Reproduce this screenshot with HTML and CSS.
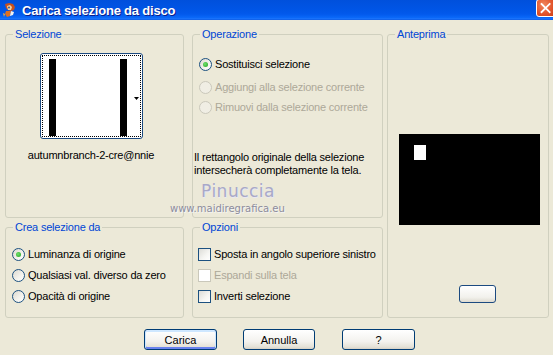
FILE: index.html
```html
<!DOCTYPE html>
<html>
<head>
<meta charset="utf-8">
<title>Carica selezione da disco</title>
<link rel="stylesheet" href="styles.css">
</head>
<body>
<div class="win">
  <div class="titlebar">
    <svg class="appicon" width="16" height="16" viewBox="0 0 16 16">
      <path d="M3 2 L7 1 L11 2 L13 5 L12 8 L9 9 L6 8 L4 6 Z" fill="#c8501e"/>
      <path d="M5 4 L8 3 L10 5 L9 8 L6 8 Z" fill="#f4d2a0"/>
      <circle cx="7" cy="5.5" r="0.9" fill="#2050a0"/>
      <path d="M4 9 L9 9 L8 14 L5 15 L3 12 Z" fill="#e07020"/>
      <path d="M9 9 L12 10 L11 13 L8 14 Z" fill="#f0f0f0"/>
      <path d="M1 11 L3 12 L2 15 Z" fill="#f6b040"/>
    </svg>
    <span class="title">Carica selezione da disco</span>
    <span class="close">
      <svg width="21" height="17" viewBox="0 0 21 17">
        <path d="M5 3.5 L14 12.5 M14 3.5 L5 12.5" stroke="#fff" stroke-width="2" stroke-linecap="square"/>
      </svg>
    </span>
  </div>

  <div class="content">
    <fieldset class="grp g-sel">
      <legend>Selezione</legend>
      <div class="thumb">
        <div class="thumb-in">
          <svg width="95" height="80" viewBox="0 0 95 80">
            <rect x="5" y="2" width="7" height="77" fill="#000"/>
            <rect x="76" y="2" width="7" height="77" fill="#000"/>
            <path d="M90 40 L95 40 L92.5 43 Z" fill="#000"/>
          </svg>
        </div>
      </div>
      <div class="thumb-label">autumnbranch-2-cre@nnie</div>
    </fieldset>

    <fieldset class="grp g-op">
      <legend>Operazione</legend>
      <div class="opts">
        <div class="opt first"><span class="radio checked"></span>Sostituisci selezione</div>
        <div class="opt disabled"><span class="radio"></span>Aggiungi alla selezione corrente</div>
        <div class="opt disabled"><span class="radio"></span>Rimuovi dalla selezione corrente</div>
      </div>
      <p class="note">Il rettangolo originale della selezione<br>intersecherà completamente la tela.</p>
    </fieldset>

    <fieldset class="grp g-prev">
      <legend>Anteprima</legend>
      <div class="preview"><div class="preview-sel"></div></div>
      <button class="mini" type="button"></button>
    </fieldset>

    <fieldset class="grp g-crea">
      <legend>Crea selezione da</legend>
      <div class="opts opts2">
        <div class="opt"><span class="radio checked"></span>Luminanza di origine</div>
        <div class="opt"><span class="radio"></span>Qualsiasi val. diverso da zero</div>
        <div class="opt"><span class="radio"></span>Opacità di origine</div>
      </div>
    </fieldset>

    <fieldset class="grp g-opz">
      <legend>Opzioni</legend>
      <div class="opts opts2 chk">
        <div class="opt"><span class="check"></span>Sposta in angolo superiore sinistro</div>
        <div class="opt disabled"><span class="check"></span>Espandi sulla tela</div>
        <div class="opt"><span class="check"></span>Inverti selezione</div>
      </div>
    </fieldset>
  </div>

  <div class="buttons">
    <button class="btn default" type="button">Carica</button>
    <button class="btn" type="button">Annulla</button>
    <button class="btn" type="button">?</button>
  </div>

  <div class="watermark">
    <div class="wm-name">Pinuccia</div>
    <div class="wm-url">www.maidiregrafica.eu</div>
  </div>
</div>
</body>
</html>
```

FILE: styles.css
```css
* { box-sizing: border-box; }
html, body { margin: 0; padding: 0; }
body {
  width: 553px;
  height: 355px;
  overflow: hidden;
  background: #ece9d8;
  font-family: "Liberation Sans", Arial, sans-serif;
  font-size: 11px;
  letter-spacing: -0.2px;
  color: #000;
}
.win { position: relative; width: 553px; height: 355px; }

.titlebar {
  height: 20px;
  display: flex;
  align-items: center;
  overflow: hidden;
  background: linear-gradient(#0050dc 0%, #0055e5 45%, #0259ec 70%, #0a68f8 88%, #1c74fc 94%, #0b58e0 100%);
}
.appicon { margin-left: 2px; flex: none; }
.title {
  margin-left: 4px;
  color: #fff;
  font-weight: bold;
  font-size: 13px;
  letter-spacing: -0.2px;
  text-shadow: 1px 1px 0 #0a1e8c;
}
.close {
  margin-left: auto;
  margin-right: -4px;
  align-self: flex-start;
  margin-top: -1px;
  width: 21px;
  height: 18px;
  border: 1px solid #fff;
  border-radius: 3px;
  background: radial-gradient(circle at 35% 30%, #f0885e, #e2532a 55%, #c43a14);
  display: flex;
}

.content {
  display: grid;
  grid-template-columns: 179px 8px 191px 4px 162px;
  grid-template-rows: 190px 97px;
  row-gap: 3px;
  padding: 8px 0 0 5px;
}
.grp {
  margin: 0;
  padding: 0;
  min-width: 0;
  border: 1px solid #d0d0bf;
  border-radius: 3px;
}
.grp legend {
  margin-left: 7px;
  padding: 0 2px;
  color: #0046d5;
  font-size: 11px;
  line-height: 13px;
}
.g-sel { grid-column: 1; grid-row: 1; }
.g-op { grid-column: 3; grid-row: 1; }
.g-prev { grid-column: 5; grid-row: 1 / span 2; }
.g-crea { grid-column: 1; grid-row: 2; }
.g-opz { grid-column: 3; grid-row: 2; }

.thumb {
  margin: 12px 0 0 34px;
  width: 103px;
  height: 86px;
  border: 1px solid #1c4a80;
  border-radius: 3px;
  padding: 1px;
  background: #fff;
}
.thumb-in {
  width: 99px;
  height: 82px;
  border: 1px dotted #000;
  display: flex;
  align-items: flex-start;
  justify-content: flex-start;
  padding: 1px 0 0 1px;
}
.thumb-label {
  margin-top: 10px;
  text-align: center;
  padding-right: 7px;
  line-height: 13px;
}

.opts { display: flex; flex-direction: column; gap: 7px; padding-left: 6px; margin-top: 17px; }
.opts .first { margin-bottom: 3px; }
.opts2 { margin-top: 14px; gap: 8px; padding-left: 6px; }
.opts2.chk { padding-left: 5px; }
.opt { display: flex; align-items: center; height: 13px; line-height: 13px; white-space: nowrap; }
.opt.disabled { color: #aca899; }

.radio {
  flex: none;
  width: 13px;
  height: 13px;
  margin-right: 3px;
  border: 1px solid #1c5180;
  border-radius: 50%;
  background: linear-gradient(135deg, #dcd9cf, #f4f3ee 60%, #fff);
  display: flex;
  align-items: center;
  justify-content: center;
}
.radio.checked::after {
  content: "";
  width: 5px;
  height: 5px;
  border-radius: 50%;
  background: radial-gradient(circle at 40% 40%, #6fe06b, #21a121);
}
.disabled .radio { border-color: #cac8bb; background: #f0eee4; }

.check {
  flex: none;
  width: 13px;
  height: 13px;
  margin-right: 3px;
  border: 1px solid #1c5180;
  background: linear-gradient(135deg, #dcdcd7, #f6f6f3 60%, #fff);
}
.disabled .check { border-color: #cac8bb; background: #fff; }

.note {
  margin: 37px 0 0 0;
  padding-left: 1px;
  line-height: 13px;
  white-space: nowrap;
}

.preview {
  margin: 93px 0 0 11px;
  width: 141px;
  height: 91px;
  background: #000;
  padding: 11px 0 0 15px;
}
.preview-sel { width: 12px; height: 15px; background: #fff; }
.mini {
  display: block;
  margin: 60px 0 0 71px;
  width: 37px;
  height: 18px;
  padding: 0;
  border: 1px solid #1c4a80;
  border-radius: 3px;
  background: linear-gradient(#fff, #f2f1ec 70%, #dedbd0);
}

.buttons {
  display: flex;
  gap: 26px;
  margin: 11px 0 0 144px;
}
.btn {
  width: 73px;
  height: 21px;
  padding: 0;
  font-family: "Liberation Sans", Arial, sans-serif;
  font-size: 11px;
  color: #000;
  border: 1px solid #003c74;
  border-radius: 3px;
  background: linear-gradient(#fff, #f3f2ee 60%, #e4e1d6 90%, #d6d0c5);
}
.btn + .btn { width: 72px; }
.btn:last-child { margin-left: 1px; width: 73px; }
.btn.default {
  box-shadow: inset 0 1px 0 1px #cee7ff, inset 0 -1px 0 1px #6982ee;
}

.watermark {
  position: absolute;
  left: 170px;
  top: 182px;
  pointer-events: none;
  letter-spacing: 0;
}
.wm-name {
  margin-left: 31px;
  font-family: "DejaVu Sans", sans-serif;
  font-size: 17px;
  line-height: 18px;
  letter-spacing: 0.5px;
  color: #a8a8c8;
  text-shadow: 1px 1px 0 #e8e8f2;
}
.wm-url {
  margin-top: 3px;
  font-family: "DejaVu Sans", sans-serif;
  font-size: 10px;
  line-height: 12px;
  color: #8c8c9c;
  text-shadow: 1px 1px 0 #f4f4f4;
}
```
